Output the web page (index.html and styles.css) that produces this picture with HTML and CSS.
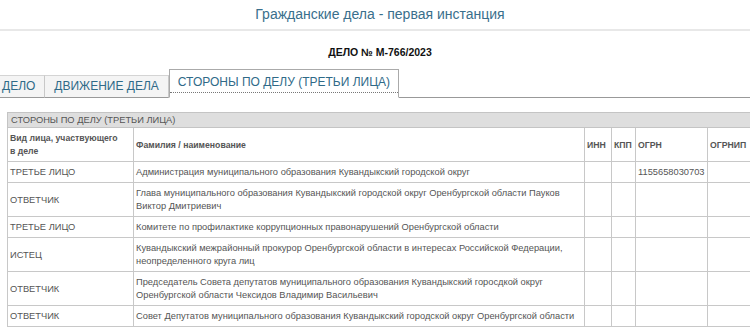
FILE: index.html
```html
<!DOCTYPE html>
<html lang="ru">
<head>
    <meta charset="UTF-8">
    <meta name="viewport" content="width=device-width, initial-scale=1.0">
    <link rel="stylesheet" href="styles.css">
</head>
<body>
    <div class="page-title">Гражданские дела - первая инстанция</div>

    <div class="case-number">ДЕЛО № М-766/2023</div>

    <div class="tabs">
        <div class="tab">ДЕЛО</div>
        <div class="tab">ДВИЖЕНИЕ ДЕЛА</div>
        <div class="tab tab-active"><span class="tab-link">СТОРОНЫ ПО ДЕЛУ (ТРЕТЬИ ЛИЦА)</span></div>
        <div class="tab-rest"></div>
    </div>

    <div class="table-wrap">
        <table class="parties">
            <colgroup>
                <col class="col-kind">
                <col class="col-name">
                <col class="col-inn">
                <col class="col-kpp">
                <col class="col-ogrn">
                <col class="col-ogrnip">
            </colgroup>
            <tr>
                <td class="section" colspan="6">СТОРОНЫ ПО ДЕЛУ (ТРЕТЬИ ЛИЦА)</td>
            </tr>
            <tr class="head">
                <th class="th-kind">Вид лица, участвующего в деле</th>
                <th>Фамилия / наименование</th>
                <th>ИНН</th>
                <th>КПП</th>
                <th>ОГРН</th>
                <th>ОГРНИП</th>
            </tr>
            <tr>
                <td>ТРЕТЬЕ ЛИЦО</td>
                <td>Администрация муниципального образования Кувандыкский городской округ</td>
                <td></td>
                <td></td>
                <td>1155658030703</td>
                <td></td>
            </tr>
            <tr>
                <td>ОТВЕТЧИК</td>
                <td>Глава муниципального образования Кувандыкский городской округ Оренбургской области Пауков Виктор Дмитриевич</td>
                <td></td>
                <td></td>
                <td></td>
                <td></td>
            </tr>
            <tr>
                <td>ТРЕТЬЕ ЛИЦО</td>
                <td>Комитете по профилактике коррупционных правонарушений Оренбургской области</td>
                <td></td>
                <td></td>
                <td></td>
                <td></td>
            </tr>
            <tr>
                <td>ИСТЕЦ</td>
                <td>Кувандыкский межрайонный прокурор Оренбургской области в интересах Российской Федерации, неопределенного круга лиц</td>
                <td></td>
                <td></td>
                <td></td>
                <td></td>
            </tr>
            <tr>
                <td>ОТВЕТЧИК</td>
                <td>Председатель Совета депутатов муниципального образования Кувандыкский горосдкой округ Оренбургской области Чексидов Владимир Васильевич</td>
                <td></td>
                <td></td>
                <td></td>
                <td></td>
            </tr>
            <tr>
                <td>ОТВЕТЧИК</td>
                <td>Совет Депутатов муниципального образования Кувандыкский городской округ Оренбургской области</td>
                <td></td>
                <td></td>
                <td></td>
                <td></td>
            </tr>
        </table>
    </div>
</body>
</html>
```

FILE: styles.css
```css
body {
    margin: 0;
    background: #fff;
    font-family: "Liberation Sans", Arial, sans-serif;
    overflow: hidden;
}

.page-title {
    height: 29px;
    line-height: 29px;
    padding-left: 10px;
    text-align: center;
    font-size: 14px;
    color: #3a6f8c;
    border-bottom: 2px solid #e8e8e8;
}

.case-number {
    margin: 15px 0 11px;
    padding-left: 10px;
    line-height: 12px;
    text-align: center;
    font-size: 10.5px;
    font-weight: bold;
    color: #111;
}

/* tabs */
.tabs {
    display: flex;
    align-items: flex-end;
    margin-left: -7px;
}

.tab {
    height: 21px;
    line-height: 21px;
    padding: 0 9px;
    font-size: 12px;
    color: #2f6a88;
    background: #f4f4f4;
    border-top: 1px solid #d4d4d4;
    border-right: 1px solid #c8c8c8;
    border-bottom: 1px solid #999;
    white-space: nowrap;
}

.tab-active {
    height: 27px;
    padding: 0;
    background: #fff;
    border: 1px solid #aaa;
    border-bottom: 1px solid #fff;
}

.tab-link {
    display: block;
    margin-top: 2px;
    padding: 0 8px;
    line-height: 20px;
    border-bottom: 1px dotted #777;
}

.tab-rest {
    flex: 1;
    border-bottom: 1px solid #999;
}

/* parties table */
.table-wrap {
    margin: 14px 0 0 7px;
}

.parties {
    width: 760px;
    table-layout: fixed;
    border-collapse: collapse;
    font-family: "Liberation Sans", Arial, sans-serif;
    font-size: 9.3px;
    color: #555;
}

.col-kind { width: 126px; }
.col-name { width: 451px; }
.col-inn { width: 27px; }
.col-kpp { width: 24px; }
.col-ogrn { width: 72px; }
.col-ogrnip { width: 60px; }

.parties td,
.parties th {
    border: 1px solid #c8c8c8;
    padding: 4px 3px 3px 2px;
    line-height: 13px;
    text-align: left;
    vertical-align: middle;
    background: #fff;
}

.parties th {
    font-size: 8.7px;
    font-weight: bold;
}

.parties .th-kind {
    padding-right: 12px;
}

.parties .section {
    padding: 0 3px;
    line-height: 14px;
    background: #dedede;
    border-color: #c4c4c4;
}
```
